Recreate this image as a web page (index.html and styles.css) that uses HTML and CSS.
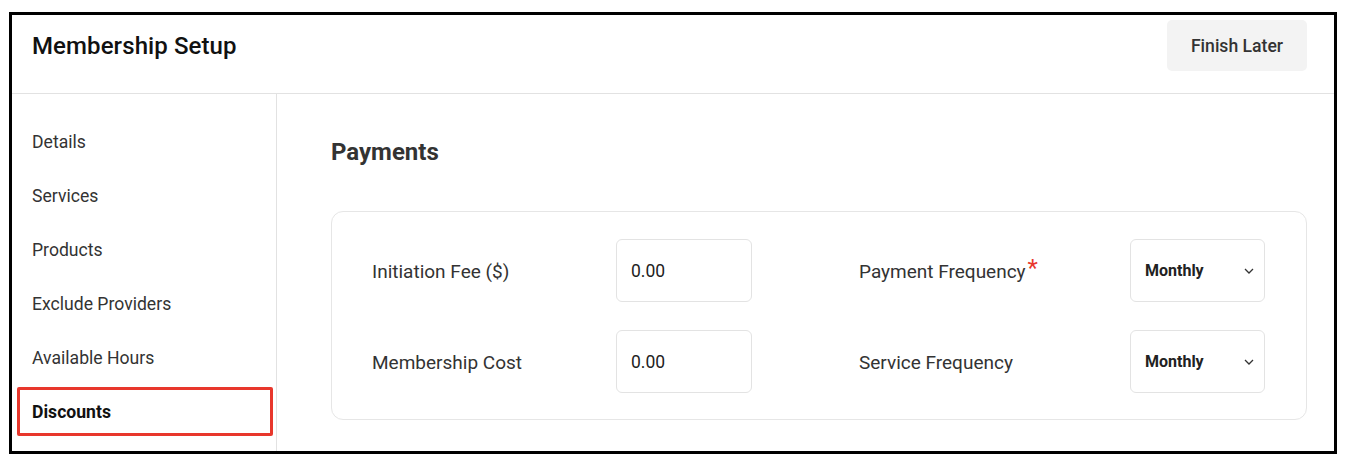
FILE: index.html
```html
<!DOCTYPE html>
<html>
<head>
<meta charset="utf-8">
<link rel="stylesheet" href="styles.css">
</head>
<body>
<div class="frame">
  <header class="topbar">
    <h1 class="title">Membership Setup</h1>
    <button class="btn-later">Finish Later</button>
  </header>
  <div class="body">
    <nav class="sidebar">
      <div class="nav-item">Details</div>
      <div class="nav-item">Services</div>
      <div class="nav-item">Products</div>
      <div class="nav-item">Exclude Providers</div>
      <div class="nav-item">Available Hours</div>
      <div class="nav-item active">Discounts</div>
    </nav>
    <main class="main">
      <h2 class="section-title">Payments</h2>
      <div class="card">
        <div class="field-label">Initiation Fee ($)</div>
        <div class="input">0.00</div>
        <div></div>
        <div class="field-label">Payment Frequency<span class="req">*</span></div>
        <div class="select"><span>Monthly</span><svg class="chev" width="10" height="6" viewBox="0 0 10 6"><path d="M1 1 L5 5 L9 1" fill="none" stroke="#333" stroke-width="1.3"/></svg></div>

        <div class="field-label">Membership Cost</div>
        <div class="input">0.00</div>
        <div></div>
        <div class="field-label">Service Frequency</div>
        <div class="select"><span>Monthly</span><svg class="chev" width="10" height="6" viewBox="0 0 10 6"><path d="M1 1 L5 5 L9 1" fill="none" stroke="#333" stroke-width="1.3"/></svg></div>
      </div>
    </main>
  </div>
</div>
</body>
</html>
```

FILE: styles.css
```css
* { box-sizing: border-box; }
html, body { margin: 0; padding: 0; background: #fff; }
body {
  font-family: Roboto, "Liberation Sans", sans-serif;
  color: #333;
  padding: 12px 0 0 9px;
}
.frame {
  width: 1328px;
  height: 442px;
  border: 3px solid #000;
  display: flex;
  flex-direction: column;
  overflow: hidden;
}
.topbar {
  height: 79px;
  flex: none;
  border-bottom: 1px solid #e2e2e2;
  display: flex;
  align-items: center;
  justify-content: space-between;
  padding: 0 27px 17px 20px;
}
.title {
  margin: 0;
  font-size: 24px;
  font-weight: 500;
  color: #111;
  letter-spacing: 0.1px;
}
.btn-later {
  width: 140px;
  height: 51px;
  border: none;
  border-radius: 5px;
  background: #f3f3f3;
  font-family: inherit;
  font-size: 17.6px;
  font-weight: 500;
  color: #333;
}
.body {
  flex: 1;
  display: flex;
}
.sidebar {
  width: 265px;
  flex: none;
  border-right: 1px solid #e2e2e2;
  padding: 21px 0 0 0;
}
.nav-item {
  position: relative;
  height: 54px;
  display: flex;
  align-items: center;
  padding-left: 20px;
  font-size: 17.6px;
  color: #333;
}
.nav-item.active {
  font-weight: 700;
  color: #111;
}
.nav-item.active::after {
  content: "";
  position: absolute;
  left: 5px;
  right: 3px;
  top: 2px;
  bottom: 3px;
  border: 3px solid #e8372c;
  border-radius: 2px;
}
.main {
  flex: 1;
  padding: 0 27px 0 54px;
}
.section-title {
  margin: 0;
  height: 117px;
  display: flex;
  align-items: center;
  padding-bottom: 2px;
  font-size: 24px;
  font-weight: 700;
  color: #333;
}
.card {
  border: 1px solid #e6e6e6;
  border-radius: 12px;
  padding: 27px 40px 26px 40px;
  display: grid;
  grid-template-columns: 244px 136px 107px 271px 135px;
  grid-auto-rows: 63px;
  row-gap: 28px;
  align-items: center;
}
.field-label {
  font-size: 19px;
  color: #333;
  padding-top: 2px;
}
.req {
  color: #e8372c;
  font-size: 24px;
  line-height: 0;
  vertical-align: 2px;
  margin-left: 2px;
}
.input {
  height: 63px;
  border: 1px solid #e3e3e3;
  border-radius: 6px;
  display: flex;
  align-items: center;
  padding-left: 14px;
  font-size: 17.5px;
  color: #222;
}
.select {
  height: 63px;
  border: 1px solid #e3e3e3;
  border-radius: 6px;
  display: flex;
  align-items: center;
  justify-content: space-between;
  padding: 0 10px 0 14px;
  font-size: 16px;
  font-weight: 700;
  color: #222;
}
.chev { display: block; }
```
